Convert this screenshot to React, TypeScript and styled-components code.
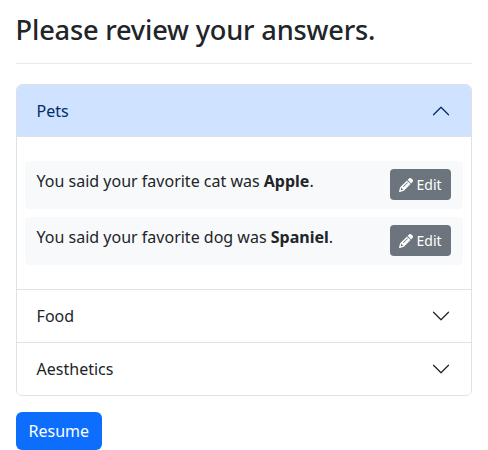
import React from "react";
import styled, { createGlobalStyle, css } from "styled-components";
import { FaPencil } from "react-icons/fa6";

const GlobalStyle = createGlobalStyle`
  *, *::before, *::after { box-sizing: border-box; }
  body {
    margin: 0;
    background: #fff;
    color: #212529;
    font-family: "Noto Sans", "Liberation Sans", sans-serif;
    font-size: 16px;
    line-height: 1.5;
  }
`;

const Page = styled.main`
  padding: 13px 16.4px 0 15.6px;
`;

const Title = styled.h1`
  margin: 0;
  font-size: 27.2px;
  font-weight: 500;
  line-height: 34px;
  letter-spacing: -0.19px;
`;

const Divider = styled.hr`
  margin: 16px 0 20px;
  border: 0;
  border-top: 1px solid #e9e9ea;
`;

const Accordion = styled.div`
  border: 1px solid #dee2e6;
  border-radius: 6px;
  overflow: hidden;
`;

const Section = styled.section`
  & + & { border-top: 1px solid #dee2e6; }
`;

const SectionHeader = styled.button<{ $open: boolean }>`
  display: flex;
  align-items: center;
  justify-content: space-between;
  width: 100%;
  height: 52px;
  padding: 0 20px;
  border: 0;
  background: #fff;
  color: #212529;
  font: inherit;
  text-align: left;
  ${({ $open }) =>
    $open &&
    css`
      background: #cfe2ff;
      color: #052c65;
      box-shadow: inset 0 -1px 0 #dee2e6;
    `}
`;

const Chevron = styled.svg<{ $open: boolean }>`
  width: 20px;
  height: 20px;
  transform: ${({ $open }) => ($open ? "rotate(180deg)" : "none")};
`;

const SectionBody = styled.div`
  display: flex;
  flex-direction: column;
  gap: 8px;
  padding: 24px 8px;
`;

const Answer = styled.div`
  display: flex;
  align-items: flex-start;
  justify-content: space-between;
  height: 48px;
  padding: 8px 12px;
  border-radius: 4px;
  background: #f8f9fa;
`;

const EditButton = styled.button`
  display: flex;
  align-items: center;
  gap: 4px;
  height: 31px;
  padding: 0 9px;
  border: 0;
  border-radius: 4px;
  background: #6c757d;
  color: #fff;
  font: inherit;
  font-size: 14px;
`;

const PencilIcon = styled(FaPencil)`
  width: 14px;
  height: 14px;
`;

const ResumeButton = styled.button`
  height: 38px;
  margin-top: 16px;
  padding: 0 13px;
  border: 0;
  border-radius: 6px;
  background: #0d6efd;
  color: #fff;
  font: inherit;
`;

const sections = [
  {
    title: "Pets",
    answers: [
      { question: "You said your favorite cat was ", value: "Apple" },
      { question: "You said your favorite dog was ", value: "Spaniel" },
    ],
  },
  { title: "Food", answers: [] },
  { title: "Aesthetics", answers: [] },
];

export default function App() {
  const [openTitle, setOpenTitle] = React.useState("Pets");
  return (
    <Page>
      <GlobalStyle />
      <Title>Please review your answers.</Title>
      <Divider />
      <Accordion>
        {sections.map(({ title, answers }) => {
          const open = title === openTitle;
          return (
            <Section key={title}>
              <SectionHeader $open={open} aria-expanded={open} onClick={() => setOpenTitle(open ? "" : title)}>
                {title}
                <Chevron $open={open} viewBox="0 0 16 16" fill="none" stroke={open ? "#052c65" : "#212529"} strokeLinecap="round" strokeLinejoin="round">
                  <path d="m2 5 6 6 6-6" />
                </Chevron>
              </SectionHeader>
              {open && (
                <SectionBody>
                  {answers.map(({ question, value }) => (
                    <Answer key={value}>
                      <span>{question}<b>{value}</b>.</span>
                      <EditButton>
                        <PencilIcon aria-hidden />
                        Edit
                      </EditButton>
                    </Answer>
                  ))}
                </SectionBody>
              )}
            </Section>
          );
        })}
      </Accordion>
      <ResumeButton>Resume</ResumeButton>
    </Page>
  );
}
